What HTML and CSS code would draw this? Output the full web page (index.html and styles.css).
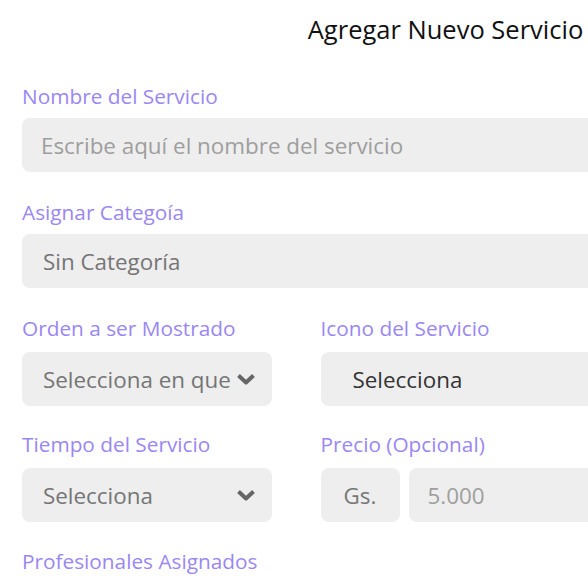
FILE: index.html
```html
<!DOCTYPE html>
<html lang="es">
<head>
<meta charset="utf-8">
<title>Agregar Nuevo Servicio</title>
<link rel="stylesheet" href="styles.css">
</head>
<body>
<div class="page">
  <h1 class="title">Agregar Nuevo Servicio</h1>
  <form class="form">
    <div class="field span3">
      <label class="label">Nombre del Servicio</label>
      <input class="box input" type="text" placeholder="Escribe aquí el nombre del servicio">
    </div>
    <div class="field span3">
      <label class="label">Asignar Categoía</label>
      <div class="box select"><span class="val muted">Sin Categoría</span></div>
    </div>
    <div class="field pair pair-a">
      <label class="label">Orden a ser Mostrado</label>
      <div class="box select">
        <span class="val muted">Selecciona en que</span>
        <svg class="chev" width="20" height="12" viewBox="0 0 20 12"><path d="M2.5 2.5 L10 9.5 L17.5 2.5" fill="none" stroke="#666" stroke-width="4" stroke-linejoin="round"/></svg>
      </div>
    </div>
    <div class="field pair pair-a span2">
      <label class="label">Icono del Servicio</label>
      <div class="box select icon-select"><span class="val dark">Selecciona</span></div>
    </div>
    <div class="field pair pair-b">
      <label class="label">Tiempo del Servicio</label>
      <div class="box select">
        <span class="val muted">Selecciona</span>
        <svg class="chev" width="20" height="12" viewBox="0 0 20 12"><path d="M2.5 2.5 L10 9.5 L17.5 2.5" fill="none" stroke="#666" stroke-width="4" stroke-linejoin="round"/></svg>
      </div>
    </div>
    <div class="field pair pair-b span2">
      <label class="label">Precio (Opcional)</label>
      <div class="price">
        <div class="box prefix">Gs.</div>
        <input class="box input price-input" type="text" placeholder="5.000">
      </div>
    </div>
    <div class="field span3">
      <label class="label">Profesionales Asignados</label>
    </div>
  </form>
</div>
</body>
</html>
```
FILE: styles.css
```css
html, body {
  margin: 0;
  padding: 0;
  overflow: hidden;
  background: #ffffff;
}
body {
  font-family: "Open Sans", "Noto Sans", sans-serif;
}
.page {
  width: 847px;
  padding: 13px 0 0 22px;
}
.title {
  margin: 0 0 38px 0;
  font-size: 25.5px;
  line-height: 32px;
  font-weight: 400;
  color: #111111;
  text-align: center;
}
.form {
  display: grid;
  grid-template-columns: 250px 250px 250px;
  column-gap: 48.5px;
}
.field {
  display: flex;
  flex-direction: column;
  margin-bottom: 27px;
  min-width: 0;
}
.pair .label { margin-bottom: 11px; }
.pair-a { margin-bottom: 25px; }
.pair-b { margin-bottom: 26px; }
.span3 { grid-column: span 3; }
.span2 { grid-column: span 2; }
.label {
  font-size: 20.8px;
  line-height: 26px;
  color: #9a87f3;
  margin-bottom: 9px;
  white-space: nowrap;
}
.box {
  box-sizing: border-box;
  height: 54px;
  background: #eeeeee;
  border: none;
  border-radius: 8px;
  font-family: "Open Sans", "Noto Sans", sans-serif;
  font-size: 22.4px;
  outline: none;
}
.input {
  width: 100%;
  padding: 0 19px;
  color: #555555;
}
.input::placeholder {
  color: #9e9e9e;
  opacity: 1;
}
.select {
  position: relative;
  display: flex;
  align-items: center;
  padding: 0 21px;
  overflow: hidden;
}
.val {
  white-space: nowrap;
}
.muted { color: #757575; }
.dark { color: #333333; }
.icon-select { padding-left: 32px; }
.chev {
  position: absolute;
  right: 16px;
  top: 21px;
}
.price {
  display: flex;
  gap: 9px;
}
.prefix {
  flex: 0 0 79px;
  display: flex;
  align-items: center;
  justify-content: center;
  color: #777777;
}
.price-input {
  flex: 1;
  width: auto;
}
```
